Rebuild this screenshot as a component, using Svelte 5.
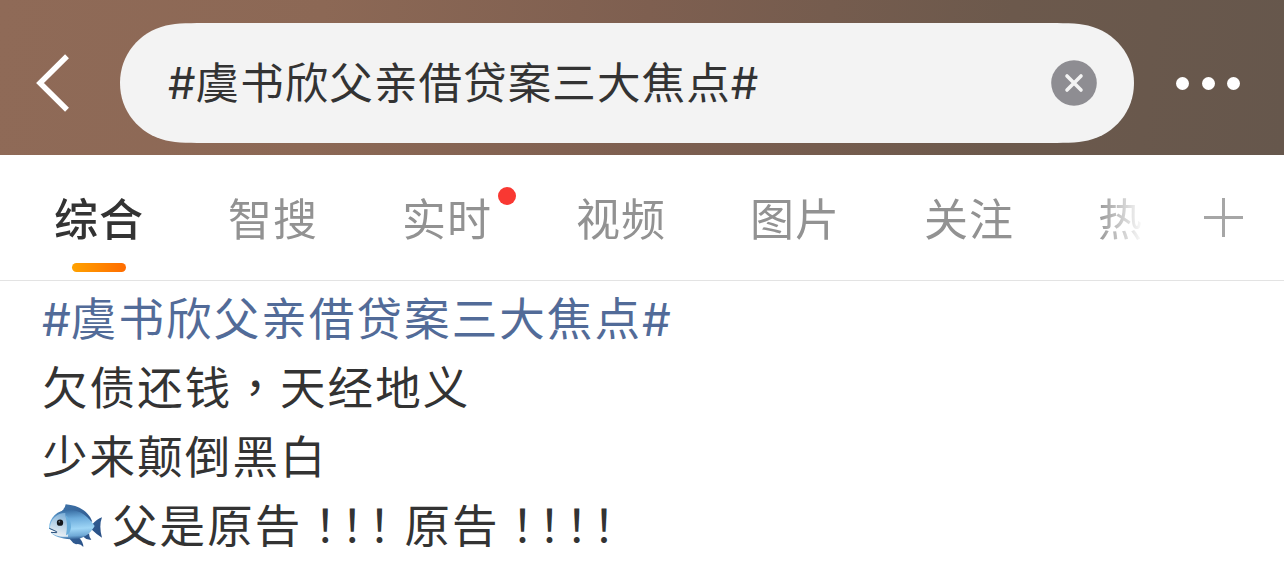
<script lang="ts">
  type Tab = { label: string; active?: boolean; dot?: boolean };

  const topic = "虞书欣父亲借贷案三大焦点";
  const tabs: Tab[] = [
    { label: "综合", active: true },
    { label: "智搜" },
    { label: "实时", dot: true },
    { label: "视频" },
    { label: "图片" },
    { label: "关注" },
    { label: "热门" },
  ];
</script>

<header>
  <button class="back" aria-label="返回">
    <svg width="34" height="58" viewBox="0 0 34 58">
      <path d="M31 2.2 L4 29 L31 55.8" fill="none" stroke="#fff" stroke-width="5.5" />
    </svg>
  </button>
  <div class="search">
    <span class="query"><b>#</b>{topic}<b>#</b></span>
    <svg width="46" height="46" viewBox="0 0 46 46">
      <circle cx="23" cy="23" r="22.8" fill="#8e8d92" />
      <path
        d="M16 16 L30 30 M30 16 L16 30"
        stroke="#f3f3f3"
        stroke-width="3.6"
        stroke-linecap="round"
      />
    </svg>
  </div>
  <button class="more" aria-label="更多">
    <i></i><i></i><i></i>
  </button>
</header>

<nav>
  <div class="tabs">
    {#each tabs as { label, active, dot }}
      <div class="tab" class:active>
        {label}
        {#if dot}<i class="dot"></i>{/if}
      </div>
    {/each}
  </div>
  <svg class="plus" width="39" height="39" viewBox="0 0 39 39">
    <path d="M19.5 0 V39 M0 19.5 H39" stroke="#a6a6a6" stroke-width="3" />
  </svg>
</nav>

<article>
  <p class="topic"><b>#</b>{topic}<b>#</b></p>
  <p>欠债还钱<span class="mark">，</span>天经地义</p>
  <p>少来颠倒黑白</p>
  <p>
    <svg class="fish" width="55" height="44" viewBox="0 0 165 132">
      <defs>
        <linearGradient id="body" x1="0.4" y1="0" x2="0.5" y2="1">
          <stop offset="0" stop-color="#35699f" />
          <stop offset="0.3" stop-color="#6cabdb" />
          <stop offset="0.65" stop-color="#9fd6f6" />
          <stop offset="0.88" stop-color="#6fa9d6" />
          <stop offset="1" stop-color="#2f5c92" />
        </linearGradient>
        <linearGradient id="fin" x1="0" y1="0" x2="1" y2="1">
          <stop offset="0" stop-color="#3f73a8" />
          <stop offset="1" stop-color="#25497f" />
        </linearGradient>
        <linearGradient id="face" x1="0.6" y1="0" x2="0.4" y2="1">
          <stop offset="0" stop-color="#7fb0d8" />
          <stop offset="0.5" stop-color="#bcd5e8" />
          <stop offset="1" stop-color="#eef2f5" />
        </linearGradient>
      </defs>
      <path
        d="M42 20 Q52 12 53 1 C92 4 122 22 133 53 L110 50 Z M132 62 Q148 44 162 40 Q152 66 162 101 Q146 92 130 76 Z M66 100 L94 102 Q106 114 106 129 Q96 117 84 121 Q74 118 66 106 Z M106 96 L124 88 Q122 98 130 107 Q116 109 106 98 Z"
        fill="url(#fin)"
      />
      <path
        d="M3 72 C4 40 30 16 64 17 C98 18 122 38 140 66 C126 92 98 110 68 106 C40 104 14 96 8 84 L26 84 L3 74 Z"
        fill="url(#body)"
      />
      <path
        d="M6 70 C8 46 26 27 52 27 C50 42 64 58 60 98 C38 100 16 94 10 85 L27 85 L6 73 Z"
        fill="url(#face)"
      />
      <path d="M53 34 Q70 48 69 70 Q67 90 54 94 Q60 62 53 34 Z" fill="#6aaedb" />
      <path
        d="M4 73 L26 83 L26 86 L9 85"
        fill="none"
        stroke="#2c517c"
        stroke-width="3"
      />
      <circle cx="36" cy="56" r="9.5" fill="#14171b" />
      <circle cx="34" cy="53" r="2.5" fill="#69737d" />
    </svg>父是原告<span class="mark tight">！！</span><span class="mark">！</span>原告<span
      class="mark tight">！！！</span
    ><span class="mark">！</span>
  </p>
</article>

<style>
  :global(body) {
    background: #fff;
    overflow: hidden;
    font-family: "Noto Sans CJK SC", sans-serif;
    color: #333;
  }

  header {
    display: flex;
    align-items: center;
    box-sizing: border-box;
    height: 155px;
    padding: 11px 43px 0 36px;
    background: linear-gradient(
      96deg,
      #8f6a57 0%,
      #8c6855 25%,
      #7e5f50 50%,
      #6c594c 78%,
      #66574c 100%
    );
  }

  button {
    display: flex;
    flex: none;
    padding: 0;
    border: 0;
    background: none;
  }

  b {
    font-family: Inter, sans-serif;
    font-weight: 400;
    line-height: 0;
    letter-spacing: 0;
  }

  .back {
    width: 84px;
  }

  .search {
    display: flex;
    align-items: center;
    justify-content: space-between;
    box-sizing: border-box;
    flex: none;
    width: 1014px;
    height: 120px;
    padding: 0 37px 0 48px;
    background: #f3f3f3;
    clip-path: path(
      "M0 60 C0 32 19 9 46 2.5 C57 0 72 0 90 0 H924 C942 0 957 0 968 2.5 C995 9 1014 32 1014 60 C1014 88 995 111 968 117.5 C957 120 942 120 924 120 H90 C72 120 57 120 46 117.5 C19 111 0 88 0 60 Z"
    );
    font-size: 43.5px;
    letter-spacing: 1.1px;
    line-height: 64px;
    white-space: nowrap;
  }

  .query {
    padding-bottom: 4px;
  }

  .more {
    gap: 12.5px;
    margin-left: 42px;
  }

  .more i {
    width: 13px;
    height: 13px;
    border-radius: 50%;
    background: #fff;
  }

  nav {
    display: flex;
    align-items: center;
    box-sizing: border-box;
    height: 126px;
    padding-left: 54px;
    border-bottom: 1px solid #e3e3e3;
  }

  .tabs {
    display: flex;
    flex: none;
    gap: 84px;
    width: 1136px;
    mask-image: linear-gradient(90deg, #000 1042px, transparent 1090px);
  }

  .tab {
    position: relative;
    flex: none;
    width: 90px;
    height: 125px;
    line-height: 125px;
    font-size: 44px;
    letter-spacing: 1px;
    white-space: nowrap;
    color: #929292;
  }

  .active {
    font-weight: 500;
    color: #333;
  }

  .active::after {
    content: "";
    position: absolute;
    left: 18px;
    bottom: 8px;
    width: 54px;
    height: 9px;
    border-radius: 5px;
    background: linear-gradient(90deg, #ffa200, #ff6c00);
  }

  .dot {
    position: absolute;
    top: 32px;
    right: -24px;
    width: 18px;
    height: 18px;
    border-radius: 50%;
    background: #f93832;
  }

  .plus {
    flex: none;
    margin-left: 14px;
  }

  article {
    padding: 1px 42px 0;
    font-size: 45.5px;
    letter-spacing: 2.1px;
    line-height: 69px;
    white-space: nowrap;
  }

  p {
    margin: 0;
  }

  .topic {
    color: #526b98;
  }

  .mark {
    font-family: "Noto Sans CJK TC", sans-serif;
  }

  .tight {
    letter-spacing: -18.3px;
  }

  .fish {
    margin: 0 9px 0 6px;
    vertical-align: -5px;
  }
</style>
